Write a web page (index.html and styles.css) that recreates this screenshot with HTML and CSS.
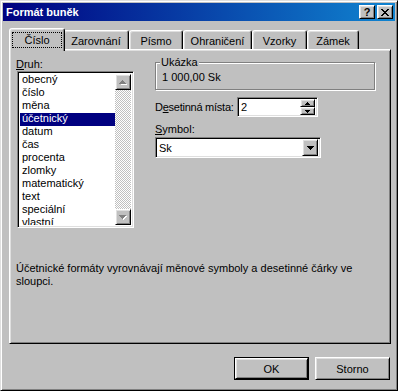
FILE: index.html
```html
<!DOCTYPE html>
<html lang="cs">
<head>
    <meta charset="UTF-8" />
    <title>Formát buněk</title>
    <link rel="stylesheet" href="styles.css">
</head>
<body>

    <div class="window">

        <!-- Záhlaví okna -->
        <div class="titlebar">
            <span class="title">Formát buněk</span>
            <div class="title-buttons">
                <div class="tbtn raised">?</div>
                <div class="tbtn raised">
                    <svg width="8" height="7" viewBox="0 0 8 7"><path d="M0 0h2v1h1v1h2V1h1V0h2v1H7v1H6v1H5v1h1v1h1v1h1v1H6V6H5V5H3v1H2v1H0V6h1V5h1V4h1V3H2V2H1V1H0z" fill="#000"/></svg>
                </div>
            </div>
        </div>

        <!-- Záložky -->
        <div class="tabs">
            <div class="tab active" style="width: 56px"><span class="focus">Číslo</span></div>
            <div class="tab" style="width: 66px">Zarovnání</div>
            <div class="tab" style="width: 54px">Písmo</div>
            <div class="tab" style="width: 69px">Ohraničení</div>
            <div class="tab" style="width: 55px">Vzorky</div>
            <div class="tab" style="width: 52px">Zámek</div>
        </div>

        <div class="panel">
            <div class="columns">

                <!-- Druh formátu -->
                <div class="col-left">
                    <div class="label"><u>D</u>ruh:</div>
                    <div class="listbox sunken">
                        <ul class="items">
                            <li>obecný</li>
                            <li>číslo</li>
                            <li>měna</li>
                            <li class="selected">účetnický</li>
                            <li>datum</li>
                            <li>čas</li>
                            <li>procenta</li>
                            <li>zlomky</li>
                            <li>matematický</li>
                            <li>text</li>
                            <li>speciální</li>
                            <li>vlastní</li>
                        </ul>
                        <div class="scrollbar">
                            <div class="sb-btn raised">
                                <svg width="8" height="5" viewBox="0 0 8 5"><path d="M4 1h1v1h1v1h1v1h1v1H2V4h1V3h1z" fill="#fff"/><path d="M3 0h1v1h1v1h1v1h1v1H0V3h1V2h1V1h1z" fill="#808080"/></svg>
                            </div>
                            <div class="sb-track"></div>
                            <div class="sb-btn raised">
                                <svg width="8" height="5" viewBox="0 0 8 5"><path d="M1 1h7v1H7v1H6v1H5v1H4V4H3V3H2V2H1z" fill="#fff"/><path d="M0 0h7v1H6v1H5v1H4v1H3V3H2V2H1V1H0z" fill="#808080"/></svg>
                            </div>
                        </div>
                    </div>
                </div>

                <!-- Nastavení -->
                <div class="col-right">
                    <div class="group">
                        <span class="group-title">Ukázka</span>
                        <div class="sample">1 000,00 Sk</div>
                    </div>

                    <div class="spin-row">
                        <span class="spin-label">D<u>e</u>setinná místa:</span>
                        <div class="spin sunken">
                            <span class="field-value">2</span>
                            <div class="spin-btns">
                                <div class="spin-btn raised">
                                    <svg width="5" height="3" viewBox="0 0 5 3"><path d="M2 0h1v1h1v1h1v1H0V2h1V1h1z" fill="#000"/></svg>
                                </div>
                                <div class="spin-btn raised">
                                    <svg width="5" height="3" viewBox="0 0 5 3"><path d="M0 0h5v1H4v1H3v1H2V2H1V1H0z" fill="#000"/></svg>
                                </div>
                            </div>
                        </div>
                    </div>

                    <div class="label symbol-label"><u>S</u>ymbol:</div>
                    <div class="combo sunken">
                        <span class="field-value">Sk</span>
                        <div class="combo-btn raised">
                            <svg width="7" height="4" viewBox="0 0 7 4"><path d="M0 0h7v1H6v1H5v1H4v1H3V3H2V2H1V1H0z" fill="#000"/></svg>
                        </div>
                    </div>
                </div>

            </div>

            <p class="desc">Účetnické formáty vyrovnávají měnové symboly a desetinné čárky ve sloupci.</p>
        </div>

        <div class="buttons">
            <div class="btn default"><span class="raised">OK</span></div>
            <div class="btn raised">Storno</div>
        </div>

    </div>

</body>
</html>
```

FILE: styles.css
```css
* {
    box-sizing: border-box;
}
body {
    margin: 0;
    font-family: "Liberation Sans", Arial, sans-serif;
    font-size: 11px;
    color: #000;
    background: #c0c0c0;
}
.raised {
    background: #c0c0c0;
    border: 1px solid;
    border-color: #fff #000 #000 #fff;
    box-shadow: inset 1px 1px #dfdfdf, inset -1px -1px #808080;
}
.sunken {
    background: #fff;
    border: 1px solid;
    border-color: #808080 #fff #fff #808080;
    box-shadow: inset 1px 1px #000, inset -1px -1px #dfdfdf;
}
.window {
    width: 398px;
    height: 391px;
    background: #c0c0c0;
    border: 1px solid;
    border-color: #dfdfdf #000 #000 #dfdfdf;
    box-shadow: inset 1px 1px #fff, inset -1px -1px #808080;
    padding: 2px;
}

/* záhlaví */
.titlebar {
    height: 18px;
    display: flex;
    align-items: center;
    justify-content: space-between;
    padding: 0 2px 0 3px;
    background: linear-gradient(to right, #000080, #1084d0);
    color: #fff;
}
.title {
    font-weight: bold;
    font-size: 11px;
}
.title-buttons {
    display: flex;
    gap: 2px;
}
.tbtn {
    width: 16px;
    height: 14px;
    display: flex;
    align-items: center;
    justify-content: center;
    color: #000;
    font-weight: bold;
    font-size: 11px;
    line-height: 12px;
}

/* záložky */
.tabs {
    display: flex;
    height: 19px;
    margin: 9px 0 0 8px;
}
.tab {
    height: 19px;
    background: #c0c0c0;
    border: 1px solid;
    border-bottom: 0;
    border-color: #fff #000 transparent #fff;
    border-radius: 3px 3px 0 0;
    box-shadow: inset 1px 1px #dfdfdf, inset -1px 0 #808080;
    text-align: center;
    line-height: 14px;
    padding-top: 3px;
}
.tab.active {
    position: relative;
    z-index: 1;
    height: 23px;
    margin: -2px -2px -2px;
    padding: 3px 2px 0;
}
.focus {
    display: block;
    height: 16px;
    line-height: 14px;
    border: 1px dotted #000;
}

/* panel */
.panel {
    margin-left: 6px;
    width: 382px;
    height: 295px;
    border: 1px solid;
    border-color: #fff #000 #000 #fff;
    box-shadow: inset 1px 1px #dfdfdf, inset -1px -1px #808080;
    padding: 8px 0 0 6px;
}
.columns {
    display: flex;
}
.label {
    line-height: 13px;
}
.col-left {
    width: 118px;
}
.listbox {
    display: flex;
    margin-left: 1px;
    width: 117px;
    height: 157px;
    padding: 2px;
}
.items {
    flex: 1;
    list-style: none;
    margin: 0;
    padding: 0;
    overflow: hidden;
}
.items li {
    height: 13px;
    line-height: 11px;
    padding-left: 2px;
}
.items li.selected {
    background: #000080;
    color: #fff;
}
.scrollbar {
    width: 16px;
    display: flex;
    flex-direction: column;
}
.sb-btn {
    height: 16px;
    display: flex;
    align-items: center;
    justify-content: center;
}
.sb-track {
    flex: 1;
    background: repeating-conic-gradient(#c0c0c0 0 25%, #fff 0 50%) 0 0 / 2px 2px;
}

.col-right {
    margin-left: 21px;
    width: 220px;
}
.group {
    position: relative;
    margin-top: 4px;
    height: 28px;
    border: 1px solid #808080;
    box-shadow: inset 1px 1px #fff, 1px 1px #fff;
    padding: 8px 0 0 6px;
}
.group-title {
    position: absolute;
    top: -7px;
    left: 4px;
    padding: 0 1px;
    background: #c0c0c0;
    line-height: 13px;
}
.sample {
    line-height: 13px;
}
.spin-row {
    display: flex;
    align-items: center;
    margin-top: 7px;
}
.spin-label {
    flex: none;
    width: 82px;
    white-space: nowrap;
    letter-spacing: -0.25px;
}
.spin {
    flex: none;
    width: 81px;
    height: 20px;
    display: flex;
    align-items: center;
    justify-content: space-between;
    padding: 2px;
}
.field-value {
    padding-left: 1px;
}
.spin-btns {
    display: flex;
    flex-direction: column;
    width: 15px;
    height: 16px;
}
.spin-btn {
    height: 8px;
    display: flex;
    align-items: center;
    justify-content: center;
}
.symbol-label {
    margin-top: 6px;
}
.combo {
    margin-top: 1px;
    width: 166px;
    height: 21px;
    display: flex;
    align-items: center;
    justify-content: space-between;
    padding: 2px;
}
.combo-btn {
    width: 16px;
    height: 17px;
    display: flex;
    align-items: center;
    justify-content: center;
}
.desc {
    width: 350px;
    margin: 34px 0 0;
    line-height: 13px;
}

/* tlačítka */
.buttons {
    display: flex;
    justify-content: flex-end;
    gap: 6px;
    margin-top: 13px;
    padding-right: 5px;
}
.btn {
    width: 75px;
    height: 23px;
    display: flex;
    align-items: center;
    justify-content: center;
}
.btn.default {
    border: 1px solid #000;
}
.btn.default span {
    width: 100%;
    height: 100%;
    display: flex;
    align-items: center;
    justify-content: center;
}
```
